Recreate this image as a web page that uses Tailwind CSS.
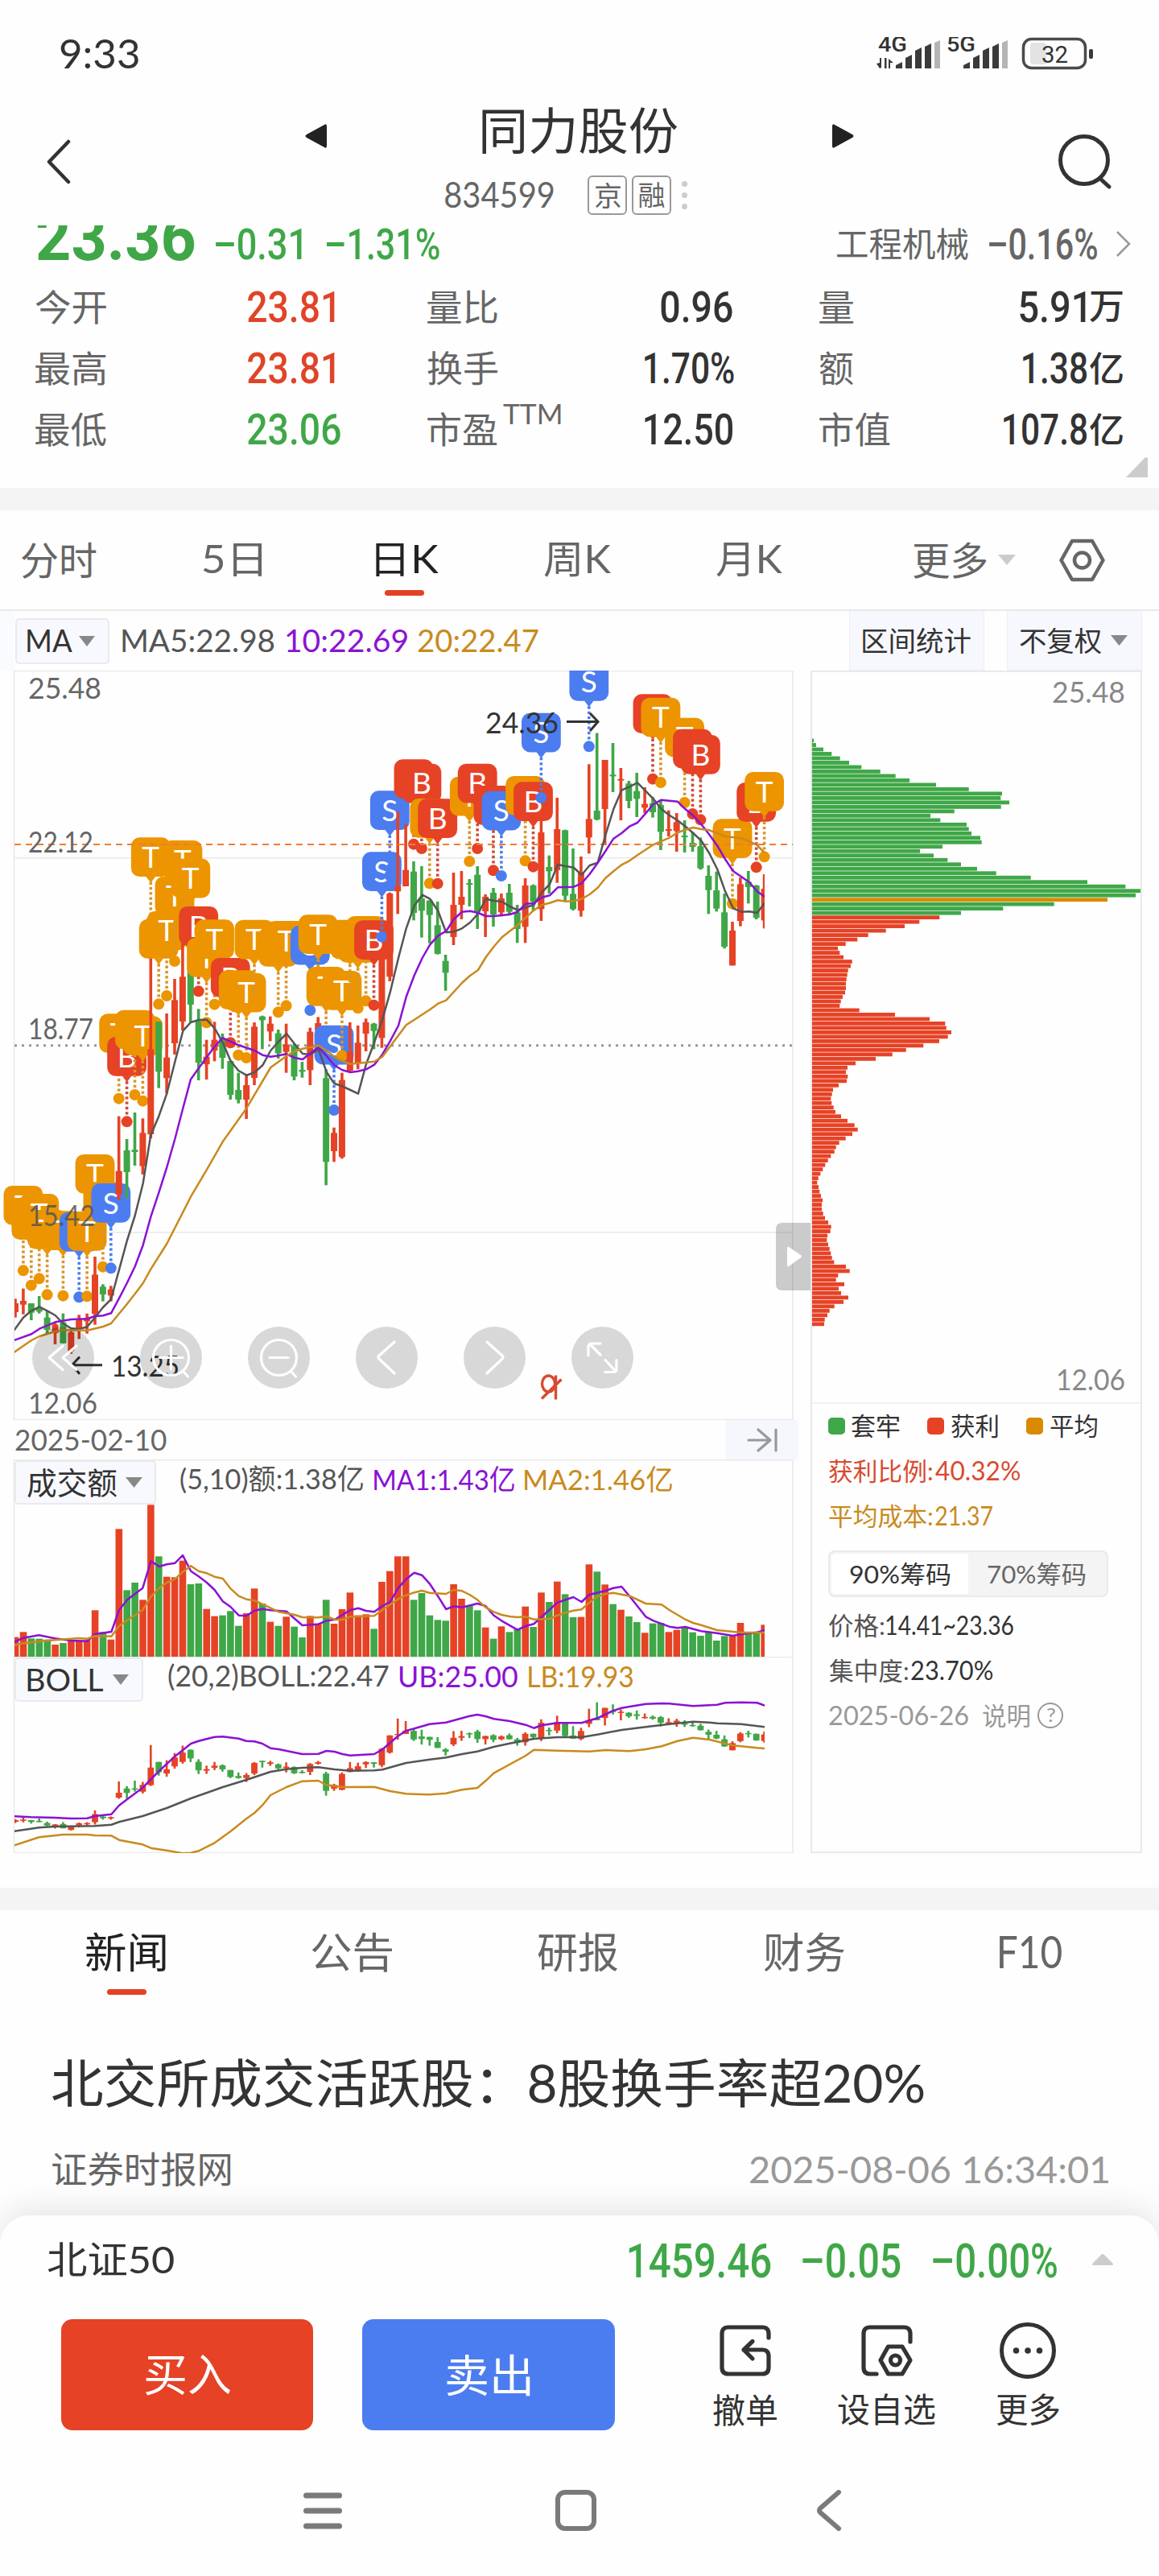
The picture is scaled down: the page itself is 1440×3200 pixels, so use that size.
<!DOCTYPE html>
<html lang="zh-CN">
<head>
<meta charset="utf-8">
<title>同力股份 834599</title>
<script src="https://cdn.jsdelivr.net/npm/@tailwindcss/browser@4"></script>
</head>
<body class="w-[1440px] h-[3200px] overflow-hidden bg-[#fefefe] text-[#333] font-['Lato','Noto_Sans_CJK_SC',sans-serif] [&_svg]:block [&_svg]:shrink-0 [&_i]:block [&_i]:not-italic [&_i]:leading-none [&_i]:whitespace-nowrap [&_i]:shrink-0 [&_i]:origin-top-left">

<!-- status bar -->
<div class="h-[133px] pl-[75px] flex items-center">
  <i class="w-[97px] text-[51px]">9:33</i>
  <svg class="ml-[917px]" width="270" height="42" viewBox="1089 46 270 42">
    <g fill="#3a3a3a">
      <path d="M1089 79l4 6 2-1V72h-2v6zM1099 72v13h2.500V72zM1104 73v12h2v-7h4z"/>
      <path d="M1113 85v-4l8-4v8zM1125 72l8-4v17h-8zM1137 63l8-4v26h-8zM1149 58l8-4v31h-8z"/>
      <path d="M1197 85v-4l8-4v8zM1209 72l8-4v17h-8zM1221 63l8-4v26h-8zM1233 58l8-4v31h-8z"/>
      <path fill="#b5b5b5" d="M1161 53l7-3v35h-7zM1245 53l7-3v35h-7z"/>
      <rect x="1353" y="61" width="5" height="12" rx="2"/>
    </g>
    <rect x="1280" y="53" width="20" height="27" rx="4" fill="#e3e3e3"/>
    <rect x="1271.500" y="48.500" width="77" height="36" rx="10" fill="none" stroke="#4a4a4a" stroke-width="3.500"/>
    <g font-family="Roboto,sans-serif" fill="#333">
      <text x="1091" y="64" font-size="25" font-weight="500" textLength="36" lengthAdjust="spacingAndGlyphs">4G</text>
      <text x="1176" y="64" font-size="25" font-weight="500" textLength="36" lengthAdjust="spacingAndGlyphs">5G</text>
      <text x="1294" y="77.500" font-size="30" textLength="33" lengthAdjust="spacingAndGlyphs">32</text>
    </g>
  </svg>
</div>

<!-- title bar -->
<header class="h-[147px] pl-[57px] flex items-start">
  <svg class="mt-[40px]" width="32" height="56" viewBox="0 0 32 56" fill="none" stroke="#333" stroke-width="4.500" stroke-linecap="round" stroke-linejoin="round"><path d="M28 3L4 28l24 25"/></svg>
  <div class="ml-[290px] w-[682px]">
    <div class="h-[58px] flex items-center justify-between">
      <svg class="mt-[14px]" width="27" height="30" viewBox="0 0 27 30" fill="#222"><path d="M24 1q3-2 3 2v24q0 4-3 2L2 17q-3-2 0-4z"/></svg>
      <i class="w-[243px] text-[62px]">同力股份</i>
      <svg class="mt-[14px]" width="27" height="30" viewBox="0 0 27 30" fill="#222"><path d="M3 1Q0-1 0 3v24q0 4 3 2l22-12q3-2 0-4z"/></svg>
    </div>
    <div class="mt-[27px] ml-[174px] h-[49px] flex items-center text-[#666]">
      <i class="w-[135px] text-[45px]">834599</i>
      <div class="ml-[42px] w-[49px] h-[49px] border-2 border-[#999] rounded-[6px] grid place-items-center"><i class="w-[32px] text-[34px]">京</i></div>
      <div class="ml-[6px] w-[49px] h-[49px] border-2 border-[#999] rounded-[6px] grid place-items-center"><i class="w-[32px] text-[34px]">融</i></div>
      <div class="ml-[13px] flex flex-col gap-[7px]"><b class="size-[7px] rounded-full bg-[#ccc]"></b><b class="size-[7px] rounded-full bg-[#ccc]"></b><b class="size-[7px] rounded-full bg-[#ccc]"></b></div>
    </div>
  </div>
  <svg class="ml-[254px] mt-[33px]" width="68" height="70" viewBox="0 0 68 70" fill="none" stroke="#333" stroke-width="5" stroke-linecap="round"><circle cx="32" cy="33" r="29.500"/><path d="M52 56l11 10"/></svg>
</header>

<!-- price summary -->
<div class="h-[46px] pl-[46px] flex items-center overflow-hidden text-[#3fa747] font-[Roboto,'Noto_Sans_CJK_SC',sans-serif] font-medium">
  <i class="self-start -mt-[27px] w-[196px] text-[82px] font-bold">23.36</i>
  <i class="ml-[26px] w-[107px] text-[54px]">–0.31</i>
  <i class="ml-[31px] w-[140px] text-[54px]">–1.31%</i>
  <i class="ml-[494px] w-[163px] text-[42px] font-normal text-[#666]">工程机械</i>
  <i class="ml-[26px] w-[134px] text-[53px] text-[#666]">–0.16%</i>
  <svg class="ml-[23px]" width="20" height="34" viewBox="0 0 20 34" fill="none" stroke="#999" stroke-width="2.500"><path d="M2 2l15 15L2 32"/></svg>
</div>
<div class="mt-[17px] pl-[44px] pr-[45px] grid grid-cols-[487px_487px_1fr] auto-rows-[76px] items-center text-[#666] text-[45px] [&>div]:flex [&>div]:items-center [&_u]:no-underline [&_u]:font-[Roboto,'Noto_Sans_CJK_SC',sans-serif] [&_u]:font-medium [&_u]:text-[#333] [&_u]:text-[54px]">
  <div><i class="w-[88px]">今开</i><u class="ml-[176px]"><i class="w-[108px] text-[#e04428]">23.81</i></u></div>
  <div><i class="w-[87px]">量比</i><u class="ml-[203px]"><i class="w-[89px]">0.96</i></u></div>
  <div class="justify-between"><i class="w-[42px]">量</i><u class="flex items-center gap-[5px]"><i class="w-[82px]">5.91</i><i class="w-[41px] text-[43px]">万</i></u></div>
  <div><i class="w-[88px]">最高</i><u class="ml-[176px]"><i class="w-[108px] text-[#e04428]">23.81</i></u></div>
  <div><i class="w-[87px]">换手</i><u class="ml-[183px]"><i class="w-[111px]">1.70%</i></u></div>
  <div class="justify-between"><i class="w-[42px]">额</i><u class="flex items-center gap-[4px]"><i class="w-[79px]">1.38</i><i class="w-[41px] text-[43px]">亿</i></u></div>
  <div><i class="w-[88px]">最低</i><u class="ml-[176px]"><i class="w-[115px] text-[#3fa747]">23.06</i></u></div>
  <div><i class="w-[87px]">市盈</i><i class="ml-[7px] w-[72px] text-[35px] -mt-[37px]">TTM</i><u class="ml-[104px]"><i class="w-[109px]">12.50</i></u></div>
  <div class="justify-between"><i class="w-[88px]">市值</i><u class="flex items-center gap-[4px]"><i class="w-[103px]">107.8</i><i class="w-[41px] text-[43px]">亿</i></u></div>
</div>
<div class="h-[35px] pr-[14px] flex justify-end"><svg class="-mt-[4px]" width="27" height="26" viewBox="0 0 27 26" fill="#ccc"><path d="M0 26L23 2q4-3 4 2v22z"/></svg></div>
<div class="h-[28px] bg-[#f4f4f4]"></div>

<!-- period tabs -->
<nav class="h-[125px] pl-[27px] flex items-center border-b-2 border-[#e9e9e9] text-[#666] text-[48px]">
  <i class="w-[93px]">分时</i>
  <i class="ml-[132px] w-[73px]">5日</i>
  <div class="ml-[142px] relative"><i class="w-[78px] text-[#222]">日K</i><b class="absolute left-[11px] top-[61px] w-[49px] h-[7px] rounded-full bg-[#e34124]"></b></div>
  <i class="ml-[131px] w-[83px]">周K</i>
  <i class="ml-[131px] w-[82px]">月K</i>
  <i class="ml-[163px] w-[91px]">更多</i>
  <svg class="ml-[14px]" width="22" height="13" viewBox="0 0 22 13" fill="#ccc"><path d="M0 0h22L11 13z"/></svg>
  <svg class="ml-[54px]" width="57" height="54" viewBox="0 0 57 54" fill="none" stroke="#666" stroke-width="4.500" stroke-linejoin="round"><path d="M16 3h25l13.500 24L41 51H16L2.500 27z"/><circle cx="28.500" cy="27" r="9.500"/></svg>
</nav>

<!-- indicator row -->
<div class="h-[74px] flex items-center text-[38px]">
  <div class="w-[18px] h-full bg-[#fafbfe]"></div>
  <div class="ml-px w-[117px] h-[57px] border-2 border-[#eaeaea] rounded-[5px] bg-[#f8f9fe] flex items-center pl-[13px]"><i class="w-[56px]">MA</i><svg class="ml-[8px]" width="20" height="13" viewBox="0 0 20 13" fill="#888"><path d="M0 0h20L10 13z"/></svg></div>
  <i class="ml-[16px] w-[189px] text-[#555]">MA5:22.98</i>
  <i class="ml-[15px] w-[150px] text-[#8a12d4]">10:22.69</i>
  <i class="ml-[13px] w-[150px] text-[#c98a1e]">20:22.47</i>
  <div class="ml-[386px] w-[168px] h-full bg-[#f7f8fe] border border-t-0 border-[#eee] grid place-items-center"><i class="w-[134px] text-[34px]">区间统计</i></div>
  <div class="ml-[28px] w-[168px] h-full bg-[#f7f8fe] border border-t-0 border-[#eee] flex items-center pl-[15px]"><i class="w-[101px] text-[34px]">不复权</i><svg class="ml-[12px]" width="21" height="13" viewBox="0 0 21 13" fill="#888"><path d="M0 0h21L10.500 13z"/></svg></div>
</div>

<!-- charts -->
<div class="flex h-[1469px]">
  <div class="w-[1007px]">
    <svg id="kline" width="1007" height="931" viewBox="0 833 1007 931"></svg>
    <div class="h-[49px] pl-[19px] pr-[15px] flex items-center justify-between">
      <i class="w-[188px] text-[37px] text-[#666]">2025-02-10</i>
      <div class="w-[91px] h-full bg-[#f6f7fd] grid place-items-center"><svg width="40" height="32" viewBox="0 0 40 32" fill="none" stroke="#999" stroke-width="3.200" stroke-linecap="round" stroke-linejoin="round"><path d="M3 16h27M15 3l15 13-15 13M37 3v26"/></svg></div>
    </div>
    <div class="relative h-[245px]">
      <svg id="vol" class="absolute inset-0" width="1007" height="245" viewBox="0 1813 1007 245"></svg>
      <div class="relative pl-[18px] pt-px flex items-start">
        <div class="w-[176px] h-[55px] border-2 border-[#eaeaea] rounded-[5px] bg-[#f8f9fe] flex items-center pl-[14px]"><i class="w-[111px] text-[38px]">成交额</i><svg class="ml-[11px]" width="21" height="13" viewBox="0 0 21 13" fill="#888"><path d="M0 0h21L10.500 13z"/></svg></div>
        <div class="ml-[30px] mt-[6px] h-[34px] flex items-center text-[35px]">
          <i class="w-[227px] text-[#555]">(5,10)额:1.38亿</i>
          <i class="ml-[14px] w-[174px] text-[#8a12d4]">MA1:1.43亿</i>
          <i class="ml-[13px] w-[183px] text-[#c98a1e]">MA2:1.46亿</i>
        </div>
      </div>
    </div>
    <div class="relative h-[244px]">
      <svg id="boll" class="absolute inset-0" width="1007" height="244" viewBox="0 2058 1007 244"></svg>
      <div class="relative pl-[18px] pt-px flex items-start">
        <div class="w-[160px] h-[55px] border-2 border-[#eaeaea] rounded-[5px] bg-[#f8f9fe] flex items-center pl-[14px]"><i class="w-[94px] text-[38px]">BOLL</i><svg class="ml-[12px]" width="20" height="13" viewBox="0 0 20 13" fill="#888"><path d="M0 0h20L10 13z"/></svg></div>
        <div class="ml-[31px] mt-[7px] h-[34px] flex items-center text-[36px]">
          <i class="w-[274px] text-[#555]">(20,2)BOLL:22.47</i>
          <i class="ml-[13px] w-[147px] text-[#8a12d4]">UB:25.00</i>
          <i class="ml-[14px] w-[129px] text-[#c98a1e]">LB:19.93</i>
        </div>
      </div>
    </div>
  </div>

  <!-- chip distribution -->
  <div class="w-[412px] border-2 border-[#e9e9e9] text-[31px]">
    <svg id="chips" width="408" height="907" viewBox="1009 835 408 907"></svg>
    <div class="border-t-2 border-[#f2f2f2] pl-[20px] pt-[12px] flex flex-col">
      <div class="h-[30px] flex items-center">
        <b class="size-[21px] rounded-[5px] bg-[#3fa747]"></b><i class="ml-[8px] w-[60px]">套牢</i>
        <b class="ml-[34px] size-[21px] rounded-[5px] bg-[#e64225]"></b><i class="ml-[9px] w-[58px]">获利</i>
        <b class="ml-[35px] size-[21px] rounded-[5px] bg-[#d98a00]"></b><i class="ml-[9px] w-[58px]">平均</i>
      </div>
      <div class="pl-px mt-[26px] h-[30px] flex items-center text-[#d94a30] gap-[4px]"><i class="w-[128px]">获利比例:</i><i class="w-[105px] text-[33px]">40.32%</i></div>
      <div class="pl-px mt-[26px] h-[30px] flex items-center text-[#c98a1e] gap-[4px]"><i class="w-[128px]">平均成本:</i><i class="w-[71px] text-[33px]">21.37</i></div>
      <div class="mt-[28px] w-[348px] h-[58px] border-2 border-[#eaeaea] rounded-[8px] bg-[#f4f4f4] p-[2px] grid grid-cols-2">
        <div class="bg-white rounded-l-[5px] grid place-items-center"><i class="w-[125px]">90%筹码</i></div>
        <div class="grid place-items-center text-[#666]"><i class="w-[122px]">70%筹码</i></div>
      </div>
      <div class="pl-px mt-[20px] h-[30px] flex items-center gap-[3px]"><i class="w-[68px] text-[#555]">价格:</i><i class="w-[158px] text-[33px]">14.41~23.36</i></div>
      <div class="pl-px mt-[26px] h-[30px] flex items-center gap-[4px]"><i class="w-[98px] text-[#555]">集中度:</i><i class="w-[101px] text-[33px]">23.70%</i></div>
      <div class="pl-px mt-[26px] h-[30px] flex items-center text-[#999]"><i class="w-[173px] text-[33px]">2025-06-26</i><i class="ml-[18px] w-[58px]">说明</i>
        <div class="ml-[10px] size-[32px] rounded-full border-[2.500px] border-[#999] grid place-items-center"><i class="w-[11px] text-[24px]">?</i></div></div>
    </div>
  </div>
</div>

<div class="mt-[43px] h-[28px] bg-[#f4f4f4]"></div>

<!-- news -->
<nav class="h-[104px] pl-[107px] flex items-center text-[#666] text-[52px]">
  <div class="relative"><i class="w-[99px] text-[#222]">新闻</i><b class="absolute left-[26px] top-[72px] w-[49px] h-[7px] rounded-full bg-[#e34124]"></b></div>
  <i class="ml-[181px] w-[100px]">公告</i>
  <i class="ml-[181px] w-[100px]">研报</i>
  <i class="ml-[181px] w-[100px]">财务</i>
  <i class="ml-[193px] w-[77px] text-[56px]">F10</i>
</nav>
<div class="mt-[78px] pl-[65px]"><i class="w-[1083px] text-[65px]">北交所成交活跃股：8股换手率超20%</i></div>
<div class="mt-[54px] pl-[65px] pr-[63px] h-[42px] flex items-center justify-between"><i class="w-[222px] text-[45px] text-[#666]">证券时报网</i><i class="w-[445px] text-[47px] text-[#999]">2025-08-06 16:34:01</i></div>

<!-- bottom sheet -->
<footer class="relative mt-[36px] h-[449px] rounded-t-[36px] bg-[#fefefe] shadow-[0_-8px_40px_rgba(0,0,0,0.1)]">
  <div class="h-[110px] pl-[59px] pr-[57px] flex items-center text-[#3fa747] font-[Roboto,sans-serif] font-medium text-[59px]">
    <i class="w-[157px] text-[47px] text-[#333] font-normal font-['Lato','Noto_Sans_CJK_SC',sans-serif]">北证50</i>
    <i class="ml-[565px] w-[177px]">1459.46</i>
    <i class="ml-[39px] w-[122px]">–0.05</i>
    <i class="ml-[40px] w-[154px]">–0.00%</i>
    <svg class="ml-[44px]" width="26" height="14" viewBox="0 0 26 14" fill="#ccc"><path d="M1 14q-2-1 0-3L11 1q2-2 4 0l10 10q2 2 0 3z"/></svg>
  </div>
  <div class="mt-[19px] h-[138px] pl-[76px] flex">
    <div class="w-[313px] rounded-[14px] bg-[#e64225] text-white grid place-items-center"><i class="w-[106px] text-[55px]">买入</i></div>
    <div class="ml-[61px] w-[314px] rounded-[14px] bg-[#4b7df0] text-white grid place-items-center"><i class="w-[104px] text-[55px]">卖出</i></div>
    <div class="ml-[122px] w-[79px] flex flex-col items-center text-[42px]">
      <svg class="mt-[3px]" width="72" height="72" viewBox="0 0 72 72" fill="none" stroke="#333" stroke-width="5.200" stroke-linecap="round" stroke-linejoin="round"><path d="M65 20v-5q0-8-8-8H15q-8 0-8 8v42q0 8 8 8h42q8 0 8-8V43q0-8-8-8H34M45 24.500L34 35l11 11"/></svg>
      <i class="mt-[16px] w-[79px]">撤单</i>
    </div>
    <div class="ml-[76px] w-[121px] flex flex-col items-center text-[42px]">
      <svg class="mt-[3px]" width="72" height="72" viewBox="0 0 72 72" fill="none" stroke="#333" stroke-width="5.200" stroke-linecap="round" stroke-linejoin="round"><path d="M65 25V15q0-8-8-8H15q-8 0-8 8v42q0 8 8 8h8M37.500 31h17.500l10 17-10 17H37.500L28 48z"/><circle cx="46.500" cy="48" r="6"/></svg>
      <i class="mt-[16px] w-[121px]">设自选</i>
    </div>
    <div class="ml-[76px] w-[78px] flex flex-col items-center text-[42px]">
      <svg class="mt-[3px]" width="72" height="72" viewBox="0 0 72 72" fill="none" stroke="#333" stroke-width="5"><circle cx="36" cy="36" r="32.500"/><g fill="#333" stroke="none"><circle cx="21.500" cy="36" r="3.800"/><circle cx="36" cy="36" r="3.800"/><circle cx="50.500" cy="36" r="3.800"/></g></svg>
      <i class="mt-[16px] w-[78px]">更多</i>
    </div>
  </div>
  <div class="h-[182px] pt-[17px] pl-[377px] flex items-center">
    <svg width="48" height="46" viewBox="0 0 48 46" stroke="#7a7a7a" stroke-width="7" stroke-linecap="round"><path d="M3.500 4h41M3.500 23h41M3.500 42h41"/></svg>
    <svg class="ml-[265px]" width="51" height="51" viewBox="0 0 51 51" fill="none" stroke="#7a7a7a" stroke-width="6"><rect x="3" y="3" width="45" height="45" rx="9"/></svg>
    <svg class="ml-[273px]" width="32" height="51" viewBox="0 0 32 51" fill="none" stroke="#7a7a7a" stroke-width="6" stroke-linecap="round" stroke-linejoin="round"><path d="M28 3L5 23q-2 2.500 0 5l23 20"/></svg>
  </div>
</footer>

<script>
// Fit each label's ink to its box width and centre it vertically.
const ctx = document.createElement('canvas').getContext('2d');
const fit = el => {
  const cs = getComputedStyle(el);
  if (cs.display !== 'block') return;
  ctx.font = cs.fontWeight + ' ' + cs.fontSize + ' ' + cs.fontFamily;
  const m = ctx.measureText(el.textContent);
  const s = el.offsetWidth / (m.actualBoundingBoxLeft + m.actualBoundingBoxRight);
  const dy = ((m.actualBoundingBoxAscent - m.actualBoundingBoxDescent) - (m.fontBoundingBoxAscent - m.fontBoundingBoxDescent)) / 2;
  el.style.transform = `translate(${m.actualBoundingBoxLeft * s}px,${dy}px) scaleX(${s})`;
};
const labels = [...document.querySelectorAll('i')];
const watcher = new ResizeObserver(list => list.forEach(e => fit(e.target)));
labels.forEach(el => watcher.observe(el));
addEventListener('load', () => labels.forEach(fit));
document.fonts.ready.then(() => labels.forEach(fit));

const RED = '#e64225', GREEN = '#3fa747', GOLD = '#ec9500', BLUE = '#4b7df0';
const X = i => 19 + 9.9 * i, Y = v => 820 + v / 3;
const rect = (x, y, w, h, c) => `<rect x="${x}" y="${y}" width="${w}" height="${h}" fill="${c}"/>`;
const label = (x, y, w, t, c, s = 37) => `<text x="${x}" y="${y}" font-size="${s}" fill="${c}" textLength="${w}" lengthAdjust="spacingAndGlyphs">${t}</text>`;
const line = (pts, fx, fy, c) => `<polyline points="${pts.trim().split(/\s+/).map(p => { const [a, b] = p.split(','); return fx(+a).toFixed(1) + ',' + fy(+b).toFixed(1); }).join(' ')}" fill="none" stroke="${c}" stroke-width="2.500" stroke-linejoin="round"/>`;

// colour, high, body top, body bottom, low, turnover bar top
const bars = `R 2380 2397 2430 2450 701|R 2342 2388 2402 2438 682|G 2397 2397 2432 2460 706|G 2370 2412 2428 2435 707|G 2425 2450 2496 2510 710
R 2470 2476 2508 2550 729|G 2435 2468 2546 2546 723|R 2500 2505 2575 2585 712|R 2440 2455 2490 2530 712|R 2435 2452 2464 2510 712
R 2223 2290 2436 2477 601|G 2326 2335 2364 2390 682|R 2332 2345 2368 2390 710|R 1700 1904 1992 2012 298|G 1785 1827 1908 2007 526
G 1686 1825 1833 1884 498|R 1708 1762 1886 1917 562|R 1043 1450 1767 1782 208|G 1348 1348 1534 1595 400|R 1317 1481 1558 1615 476
R 1188 1267 1428 1470 478|R 1054 1180 1347 1380 416|G 1122 1130 1284 1350 504|G 1300 1345 1500 1566 501|R 1415 1478 1506 1563 596
R 1348 1415 1455 1495 623|G 1392 1410 1482 1523 620|G 1492 1494 1620 1638 604|G 1538 1602 1638 1652 659|R 1548 1584 1638 1710 612
R 1350 1366 1557 1584 520|G 1325 1328 1342 1450 576|R 1328 1355 1384 1420 644|G 1377 1391 1465 1485 659|R 1355 1432 1460 1538 625
G 1430 1438 1552 1566 662|G 1497 1527 1534 1556 702|R 1370 1385 1528 1584 622|R 1330 1353 1380 1395 650|G 1525 1558 1870 1957 562
R 1742 1762 1830 1870 651|R 1538 1565 1852 1858 597|R 1350 1460 1530 1534 535|R 1362 1426 1500 1525 620|R 1336 1350 1392 1458 616
G 1352 1355 1382 1450 670|R 1097 1110 1408 1445 495|R 866 870 1180 1197 455|R 565 843 862 946 400|R 610 782 843 843 400
G 750 788 942 970 562|G 768 888 934 1034 537|G 895 896 950 1055 620|G 900 988 1095 1097 637|G 1098 1121 1165 1232 640
R 792 912 1032 1062 504|R 786 882 912 966 558|G 816 831 837 918 583|G 768 800 936 1002 601|R 873 882 936 1032 665
G 849 867 948 993 707|R 870 888 940 955 661|G 834 867 938 945 682|G 912 940 1002 1054 672|R 813 840 994 1054 587
G 836 840 900 935 663|R 579 642 928 972 535|G 728 771 787 870 570|R 513 630 783 830 494|G 632 634 878 900 541
G 702 871 928 933 627|R 732 790 934 956 626|R 388 592 661 721 430|G 272 561 594 597 457|R 372 372 555 690 505
G 309 427 433 492 578|R 402 443 449 597 599|G 450 460 525 552 624|G 420 488 517 585 645|R 474 536 550 570 685
G 510 534 567 587 650|G 520 540 640 708 648|R 560 630 636 657 682|R 570 604 637 714 674|G 597 654 658 717 664
G 640 681 696 714 683|G 661 694 776 781 696|G 765 804 857 946 684|G 788 858 926 937 714|G 870 940 1068 1075 697
R 975 1008 1138 1138 697|R 810 835 972 992 648|G 786 826 846 907 686|G 838 840 960 966 684|R 798 852 970 1000 655`
  .split(/[|\n]/).map(s => { const p = s.trim().split(' '); return { c: p[0] === 'R' ? RED : GREEN, v: p.slice(1).map(Number) }; });

// index, type, anchor level
const marks = {};
`1T2275 2T2330 3T2305 4T2365 6T2369 8S2374 9T2371 10T2158 11T2261 12S2266 13T1634 14B1720 15T1620 16T1643 17T977 18T1282 19T1251 20T1122 21T988 22T1056 23B1234 24T1351 25T1283 27B1426 28T1472 29T1482 30T1284 33T1312 34T1288 37S1305 38T1265 39T1459 40S1677 41T1474 42T1284 43T1297 44T1270 45B1286 46S1031 47S803 50B686 51B702 52T832 53B833 57T750 58B702 60B784 61S804 64T748 65B770 66S513 72S322 80B443 81T456 84T531 85B573 86B595 90T908 93B772 94T733`
  .split(' ').forEach(s => { const m = s.match(/(\d+)([A-Z])(\d+)/); marks[m[1]] = [m[2], +m[3]]; });

let k = `<defs><clipPath id="c"><rect x="18" y="833" width="932" height="931"/></clipPath></defs>
<g fill="none" stroke="#e9e9e9"><path d="M17.500 833.500H985V1763.500H17.500z" stroke-width="1.600"/><path d="M18 1065.700H985M18 1531H985" stroke-width="1.400"/></g>
<path d="M18 1298.700H985" stroke="#999" stroke-width="3" stroke-dasharray="3 6"/>`;
bars.forEach((b, i) => {
  const x = X(i), [h, t, d, l] = b.v;
  k += `<g clip-path="url(#c)">` + rect(x - 1.8, Y(h), 3.6, (l - h) / 3, b.c) + rect(x - 4, Y(t), 8, Math.max(2, (d - t) / 3), b.c) + '</g>';
  if (marks[i]) {
    const [ty, v] = marks[i], c = { T: GOLD, B: RED, S: BLUE }[ty], y = Y(v), s = ty === 'T' ? '#d9952c' : ty === 'B' ? '#d04a38' : BLUE;
    k += `<path d="M${x} ${y - 50}V${y}" stroke="${s}" stroke-width="3.600" stroke-dasharray="3.300 3"/>
<rect x="${x - 24.4}" y="${y - 105.3}" width="48.800" height="48.700" rx="10.500" fill="${c}"/><path d="M${x - 6} ${y - 57}h12l-6 8z" fill="${c}"/>
<circle cx="${x}" cy="${y}" r="7" fill="${c}"/><text x="${x}" y="${y - 67.8}" font-size="37" fill="#fff" text-anchor="middle">${ty}</text>`;
  }
});
const L = x => x / 3;
k += `<path d="M18 1049H985" stroke="#f07c35" stroke-width="2" stroke-dasharray="8 6"/><g clip-path="url(#c)">`
+ line(`52,2498 87,2450 117,2425 147,2410 176,2425 206,2442 235,2472 265,2490 295,2493 325,2485 354,2450 384,2412 414,2382 443,2275 473,2165 503,2070 533,1950 562,1770 592,1700 622,1615 652,1498 682,1382 711,1350 741,1341 770,1340 800,1372 830,1425 860,1495 889,1530 919,1547 949,1537 979,1510 1009,1455 1038,1422 1068,1392 1098,1430 1128,1467 1157,1470 1187,1450 1217,1535 1246,1578 1276,1588 1306,1602 1335,1616 1365,1505 1395,1425 1425,1340 1454,1238 1485,1110 1514,1000 1544,915 1574,875 1603,890 1633,935 1663,1015 1692,1012 1722,1000 1752,978 1782,945 1811,890 1841,897 1871,900 1900,918 1930,932 1960,922 1990,912 2020,865 2049,835 2079,762 2109,768 2138,773 2168,800 2198,765 2228,755 2257,652 2287,555 2317,485 2346,472 2376,457 2406,487 2435,517 2465,555 2495,578 2525,597 2555,620 2584,645 2614,673 2644,720 2674,780 2703,862 2733,925 2763,938 2793,937 2822,942 2850,905`, L, Y, '#555')
+ line(`52,2535 117,2512 147,2492 206,2467 265,2457 325,2455 354,2445 384,2443 414,2434 443,2380 473,2322 503,2260 533,2180 562,2075 592,1985 622,1890 652,1785 682,1670 711,1562 741,1520 800,1440 830,1408 860,1422 889,1435 949,1455 979,1472 1009,1478 1038,1474 1068,1468 1098,1482 1128,1488 1157,1465 1187,1443 1217,1475 1246,1510 1276,1528 1306,1536 1335,1532 1365,1525 1395,1508 1425,1470 1454,1420 1485,1362 1514,1255 1544,1175 1574,1110 1603,1060 1633,1027 1663,1010 1692,965 1722,938 1752,935 1782,942 1811,954 1841,954 1900,948 1930,938 1960,908 1990,906 2020,884 2049,877 2079,847 2138,845 2168,832 2198,797 2228,755 2257,712 2287,665 2317,645 2346,620 2376,606 2406,572 2435,537 2465,521 2525,527 2555,556 2584,580 2614,612 2644,650 2674,692 2703,742 2733,787 2763,807 2793,828 2822,862 2850,882`, L, Y, '#8a12d4')
+ line(`52,2580 117,2535 147,2520 206,2502 235,2497 325,2498 384,2484 414,2472 473,2400 503,2362 533,2322 562,2270 622,2175 711,2000 770,1900 830,1795 919,1670 1009,1518 1068,1475 1098,1458 1128,1448 1157,1443 1187,1436 1217,1455 1246,1478 1276,1495 1306,1505 1395,1496 1425,1478 1454,1440 1514,1360 1603,1302 1633,1280 1663,1268 1722,1203 1752,1176 1782,1155 1811,1107 1841,1067 1871,1033 1930,987 1990,932 2020,912 2049,905 2079,895 2109,899 2138,898 2168,890 2198,873 2228,848 2257,812 2287,787 2317,763 2346,748 2376,727 2435,688 2495,662 2525,643 2555,632 2584,624 2614,630 2644,634 2674,645 2703,657 2763,664 2793,675 2822,690 2850,718`, L, Y, '#c98a1e') + '</g>'
+ label(35, 867.5, 91, '25.48', '#666') + label(35, 1058.5, 81, '22.12', '#666') + label(35, 1291, 81, '18.77', '#666') + label(35, 1523, 83, '15.42', 'rgba(85,85,85,.85)') + label(35, 1756, 86, '12.06', '#666')
+ label(603, 911, 91, '24.36', '#333') + label(138, 1710, 85, '13.25', '#333')
+ `<path d="M704 896.500h37M733 886l10 10.500-10 11.500" fill="none" stroke="#333" stroke-width="3"/><path d="M127 1695.700H91M99 1685.500l-9.500 10.200 9.500 11" fill="none" stroke="#333" stroke-width="3"/>`
+ [78.5, 212.5, 346.5, 480.5, 614.5, 748.5].map(x => `<circle cx="${x}" cy="1686.500" r="38.500" fill="rgba(0,0,0,.15)"/>`).join('')
+ `<g fill="none" stroke="#fff" stroke-width="3.200" stroke-linecap="round" stroke-linejoin="round">
<path d="M78 1672l-17 14.500 17 15M95 1672l-17 14.500 17 15"/>
<circle cx="212.500" cy="1686.500" r="22"/><path d="M198 1686.500h29M212.500 1672v29M228 1704l5.500 6"/>
<circle cx="346.500" cy="1686.500" r="22"/><path d="M335 1686.500h23M362 1704l5.500 6"/>
<path d="M490 1667l-19 17q-2 2 0 4l19 18M605 1667l19 17q2 2 0 4l-19 18"/>
<path d="M731 1684v-11q0-4 4-4h11M733 1670l13 13M766 1689.500v11q0 4-4 4h-10.500M752 1689.500l12 13"/></g>
<g fill="none" stroke="#d94a30" stroke-width="3.400"><ellipse cx="681.500" cy="1719" rx="8" ry="10"/><path d="M690.500 1708.500v30M673 1737.500l24.500-24"/></g>
<path d="M1007 1519h-35q-8 0-8 8v68q0 8 8 8h35z" fill="rgba(0,0,0,.2)"/><path d="M978 1550q0-2 2-1l15.500 10.500q1 1.300 0 2.500L980 1573q-2 1-2-1z" fill="#fff"/>`;
kline.innerHTML = k;
kline.setAttribute('font-family', "Lato, sans-serif");

// turnover pane
const VX = x => x / 1.568, VY = y => 1800 + y / 3;
vol.innerHTML = `<path d="M17.500 1813.700H985V2060H17.500z" fill="none" stroke="#e9e9e9" stroke-width="1.600"/><clipPath id="c2"><rect x="18" y="1813" width="932" height="490"/></clipPath><g clip-path="url(#c2)">`
+ bars.map((b, i) => rect(X(i) - 4.2, VY(b.v[4]), 8.6, (774 - b.v[4]) / 3, b.c)).join('')
+ line(`28,720 45,704 76,694 107,706 138,714 170,716 185,690 217,681 232,600 248,562 278,518 294,418 310,438 325,430 341,425 356,396 372,455 387,475 403,498 418,525 434,568 449,588 465,620 480,622 496,602 511,596 527,601 558,605 574,632 589,657 620,653 636,640 652,636 682,601 698,593 713,603 729,607 745,585 760,570 775,520 791,485 807,461 822,470 837,502 853,548 869,597 884,586 900,590 930,576 946,585 962,620 977,640 1008,674 1024,660 1040,652 1055,626 1086,572 1117,552 1133,570 1148,543 1180,528 1195,518 1211,513 1227,550 1258,625 1273,640 1304,662 1320,667 1335,663 1366,679 1397,686 1428,696 1444,690 1475,683 1490,675`, VX, VY, '#8a12d4')
+ line(`28,731 45,724 76,717 107,712 154,705 170,707 185,697 217,698 232,660 248,638 278,600 294,550 310,518 325,498 341,485 356,458 372,436 387,455 403,463 418,476 434,483 449,520 465,548 480,560 496,565 511,578 543,607 558,612 574,618 589,627 620,628 636,623 652,636 667,636 682,625 729,622 745,600 760,580 775,560 791,545 807,535 822,528 837,536 869,540 884,525 900,529 915,543 930,562 946,590 962,607 977,618 993,624 1008,627 1024,625 1040,635 1071,633 1086,620 1102,610 1117,602 1133,598 1148,573 1164,550 1180,540 1195,536 1227,548 1258,576 1289,580 1304,600 1320,618 1335,635 1350,648 1366,656 1397,675 1413,678 1444,684 1490,684`, VX, VY, '#c98a1e') + '</g>';

// bollinger pane
const B = v => VY(944 + (v - 272) * 0.2065);
boll.innerHTML = `<path d="M17.500 2058.500H985V2301.500H17.500z" fill="none" stroke="#e9e9e9" stroke-width="1.600"/><g clip-path="url(#c2)">`
+ bars.map((b, i) => { const [h, t, d, l] = b.v; return rect(X(i) - 1.3, B(h), 2.6, B(l) - B(h), b.c) + rect(X(i) - 3.9, B(t), 7.8, Math.max(1.5, B(d) - B(t)), b.c); }).join('')
+ line(`28,1424 76,1411 107,1407 185,1405 217,1400 232,1390 278,1368 325,1338 372,1302 434,1260 480,1233 527,1203 558,1193 589,1188 620,1186 652,1194 682,1199 729,1198 745,1195 791,1170 837,1157 869,1150 900,1137 930,1127 962,1110 993,1097 1040,1080 1086,1074 1133,1074 1164,1064 1211,1047 1258,1036 1304,1025 1350,1016 1382,1019 1397,1022 1444,1025 1490,1036`, VX, VY, '#555')
+ line(`28,1369 60,1372 107,1374 138,1377 170,1376 185,1368 217,1361 232,1328 248,1305 278,1262 310,1200 341,1145 372,1098 387,1088 418,1073 434,1072 465,1079 480,1088 496,1090 511,1098 527,1115 543,1119 589,1137 620,1136 636,1125 652,1128 667,1137 682,1142 729,1137 745,1120 760,1095 775,1070 791,1050 807,1042 837,1025 869,1019 915,995 930,990 946,996 962,1006 993,1014 1024,1028 1040,1040 1055,1030 1086,1021 1133,1021 1164,1003 1195,975 1211,965 1227,960 1258,950 1289,948 1304,949 1350,958 1397,953 1413,946 1444,944 1475,946 1490,956`, VX, VY, '#8a12d4')
+ line(`28,1477 76,1447 123,1437 170,1437 185,1440 217,1441 232,1457 278,1474 294,1487 325,1496 356,1507 372,1505 387,1498 418,1468 449,1425 480,1378 496,1356 511,1328 527,1290 558,1260 589,1238 620,1236 636,1252 667,1260 729,1259 760,1275 791,1285 837,1288 869,1283 900,1270 930,1263 946,1237 962,1208 1024,1143 1040,1121 1086,1124 1148,1127 1180,1122 1227,1126 1258,1119 1289,1108 1320,1088 1350,1076 1382,1083 1428,1105 1475,1114 1490,1116`, VX, VY, '#c98a1e') + '</g>';

// chip histogram
const chipData = [93,102,129,160,191,225,271,341,398,450,549,671,795,790,822,791,617,528,565,663,671,681,714,719,573,489,540,592,642,702,773,902,1113,1255,1311,1293,1188,989,799,642,562,487,432,362,296,256,212,183,190,204,236,231,221,218,215,213,213,210,201,194,190,263,396,525,583,587,606,593,561,502,437,386,324,249,219,213,220,216,186,165,161,157,160,167,174,195,219,245,257,237,212,188,176,170,157,146,136,127,118,110,106,111,115,120,126,123,123,128,135,147,158,155,144,142,147,152,157,161,169,213,227,184,176,207,186,195,222,204,170,152,144,134,132];
chips.innerHTML = chipData.map((v, i) => rect(1008, (917.6 + i * 5.491).toFixed(2), ((v - 84) / 3).toFixed(1), 4.8, i === 36 ? '#d98a00' : i < 40 ? GREEN : RED)).join('')
+ label(1307, 872.8, 91, '25.48', '#888') + label(1312, 1727, 86, '12.06', '#888');
chips.setAttribute('font-family', "Lato, sans-serif");
</script>
</body>
</html>
